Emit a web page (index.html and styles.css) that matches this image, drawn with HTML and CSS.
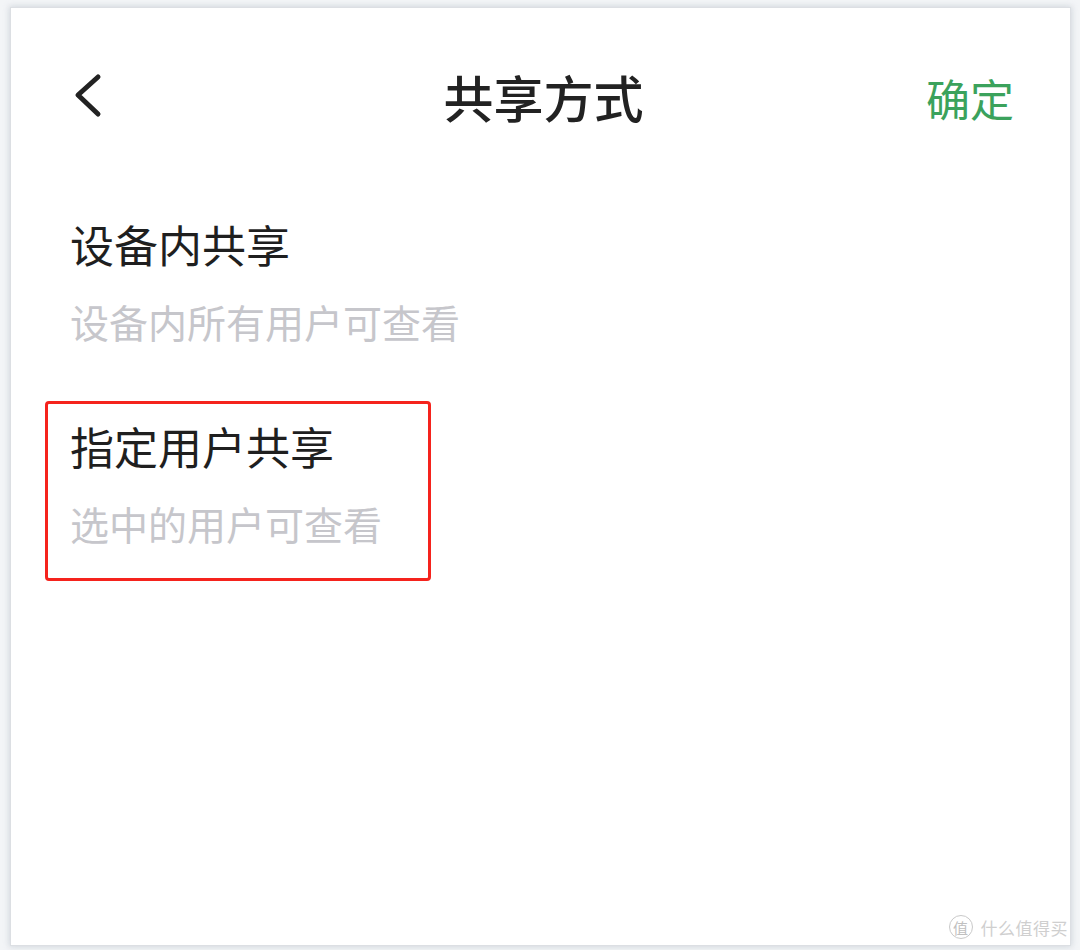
FILE: index.html
```html
<!DOCTYPE html>
<html lang="zh-CN">
<head>
    <meta charset="UTF-8">
    <meta name="viewport" content="width=device-width, initial-scale=1.0">
    <title>共享方式</title>
    <link rel="stylesheet" href="styles.css">
</head>
<body>
    <div class="page">
        <div class="card">
            <div class="header">
                <div class="back">
                    <svg width="34" height="48" viewBox="0 0 34 48">
                        <polyline points="25,5 5,23 25,42" fill="none" stroke="#222" stroke-width="5" stroke-linecap="round" stroke-linejoin="round"/>
                    </svg>
                </div>
                <h1 class="title">共享方式</h1>
                <div class="confirm">确定</div>
            </div>

            <div class="option">
                <p class="option-name">设备内共享</p>
                <p class="option-desc">设备内所有用户可查看</p>
            </div>

            <div class="option marked">
                <p class="option-name">指定用户共享</p>
                <p class="option-desc">选中的用户可查看</p>
            </div>

            <div class="watermark">
                <span class="mark-badge">值</span>
                <span class="mark-text">什么值得买</span>
            </div>
        </div>
    </div>
</body>
</html>
```

FILE: styles.css
```css
body {
    margin: 0;
    background-color: #f3f5f7;
    font-family: "Noto Sans CJK SC", "Noto Sans", sans-serif;
}
.page {
    padding: 8px 10px 5px 11px;
}
.card {
    position: relative;
    display: flex;
    flex-direction: column;
    align-items: flex-start;
    height: 937px;
    background-color: #fff;
    box-shadow: 0 0 0 1px #dcdfe3, 0 0 6px 2px rgba(170, 180, 190, 0.45);
    padding-left: 34px;
    box-sizing: border-box;
}
.header {
    align-self: stretch;
    display: grid;
    grid-template-columns: 1fr auto 1fr;
    align-items: center;
    height: 186px;
    margin-left: -34px;
    padding: 0 56px 10px 62px;
    box-sizing: border-box;
}
.back {
    display: flex;
    align-items: center;
    height: 48px;
}
.title {
    margin: 0;
    font-size: 50px;
    font-weight: 500;
    line-height: 1;
    color: #222;
}
.confirm {
    justify-self: end;
    font-size: 44px;
    line-height: 1;
    color: #3ba25c;
    transform: translateY(2px);
}
.option {
    display: flex;
    flex-direction: column;
    gap: 36px;
    width: 386px;
    box-sizing: border-box;
    padding: 20px 22px 35px;
    border: 3px solid transparent;
    border-radius: 4px;
    margin-top: 5px;
}
.option + .option {
    margin-top: 22px;
}
.marked {
    border-color: #f5231d;
}
.option-name {
    margin: 0;
    font-size: 44px;
    line-height: 44px;
    color: #1f1f1f;
    white-space: nowrap;
}
.option-desc {
    margin: 0;
    font-size: 39px;
    line-height: 39px;
    color: #c6c6cb;
    white-space: nowrap;
}
.watermark {
    position: absolute;
    right: 2px;
    bottom: 6px;
    display: flex;
    align-items: center;
    gap: 8px;
}
.mark-badge {
    display: flex;
    align-items: center;
    justify-content: center;
    width: 22px;
    height: 22px;
    border: 1.5px solid #c9c9c9;
    border-radius: 50%;
    font-size: 15px;
    line-height: 1;
    color: #c0c0c0;
}
.mark-text {
    font-size: 17px;
    line-height: 1;
    color: #cfcfcf;
    letter-spacing: 0.5px;
}
```
